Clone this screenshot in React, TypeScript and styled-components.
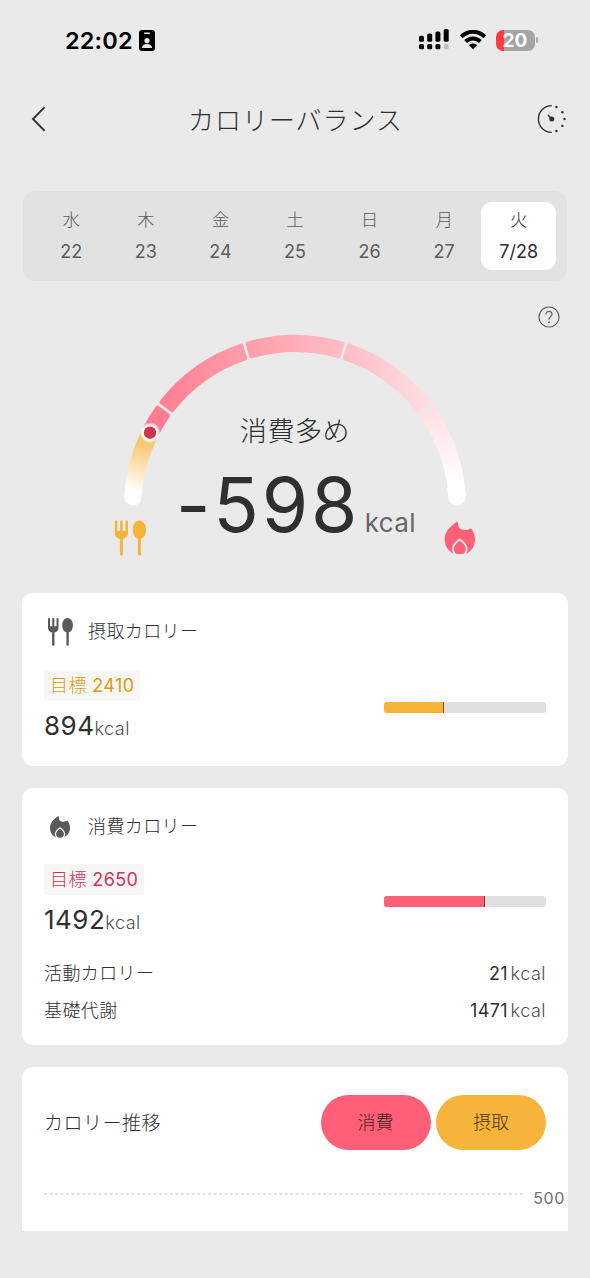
import React from "react";
import styled, { createGlobalStyle } from "styled-components";

const GlobalStyle = createGlobalStyle`
  * { box-sizing: border-box; }
  body {
    margin: 0;
    background: #eaeaea;
    color: #2e2f2f;
    font-family: Inter, "Noto Sans CJK JP", sans-serif;
    font-weight: 300;
  }
  svg { display: block; flex: none; }
`;

const Screen = styled.div`
  width: 590px;
  height: 1278px;
  overflow: hidden;
  background: #eaeaea;
  display: flex;
  flex-direction: column;
`;

const StatusBar = styled.div`
  height: 80px;
  flex: none;
  padding: 0 52px 0 65px;
  display: flex;
  align-items: center;
  justify-content: space-between;
`;

const StatusGroup = styled.div<{ $gap: number }>`
  display: flex;
  align-items: center;
  gap: ${(p) => p.$gap}px;
`;

const Clock = styled.span`
  margin-top: 1px;
  font-size: 23.5px;
  font-weight: 600;
  line-height: 28px;
  letter-spacing: 0.15px;
  color: #000;
`;

const Battery = styled.div`
  display: flex;
  align-items: center;
  gap: 1px;
`;

const BatteryBody = styled.div`
  width: 39px;
  height: 21px;
  border-radius: 7px;
  background: linear-gradient(90deg, #ff3b3f 8px, #a4a4a4 8px);
  color: #fff;
  font-size: 19px;
  font-weight: 700;
  line-height: 21px;
  text-align: center;
`;

const BatteryTip = styled.div`
  width: 2.5px;
  height: 6px;
  border-radius: 0 3px 3px 0;
  background: #a4a4a4;
`;

const Header = styled.header`
  height: 78px;
  flex: none;
  padding: 0 23px 0 30px;
  display: flex;
  align-items: center;
  justify-content: space-between;
`;

const Title = styled.h1`
  margin: 3px 0 0 6px;
  font-size: 26px;
  font-weight: 300;
  line-height: 40px;
  letter-spacing: 1px;
`;

const DayBar = styled.nav`
  margin: 33px 23px 0;
  height: 90px;
  flex: none;
  padding: 11px 11px;
  border-radius: 12px;
  background: #e2e2e2;
  display: grid;
  grid-template-columns: repeat(7, 1fr);
`;

const Day = styled.div<{ $active?: boolean }>`
  height: 68px;
  padding-top: 2px;
  border-radius: 11px;
  background: ${(p) => (p.$active ? "#fff" : "transparent")};
  color: ${(p) => (p.$active ? "#2e2f2f" : "#5c5c5c")};
  display: flex;
  flex-direction: column;
  align-items: center;
`;

const Weekday = styled.span`
  font-size: 17.5px;
  line-height: 32px;
`;

const DateNumber = styled.span`
  font-size: 18px;
  line-height: 32px;
  font-weight: 400;
`;

const HelpRow = styled.div`
  height: 54px;
  flex: none;
  padding: 25px 30px 0 0;
  display: flex;
  justify-content: flex-end;
`;

const GaugeArea = styled.section`
  position: relative;
  height: 258px;
  flex: none;
  display: flex;
  flex-direction: column;
  align-items: center;
`;

const GaugeDrawing = styled.svg`
  position: absolute;
  left: 95px;
  top: -15px;
`;

const GaugeLabel = styled.div`
  position: relative;
  margin-top: 77px;
  font-size: 27px;
  line-height: 40px;
  letter-spacing: 0.5px;
`;

const GaugeReading = styled.div`
  position: relative;
  width: 240px;
  margin: 13px 0 0 2px;
  display: flex;
  align-items: baseline;
  justify-content: space-between;
  line-height: 80px;
`;

const GaugeValue = styled.span`
  font-size: 75px;
  font-weight: 400;
  letter-spacing: 2.8px;
`;

const GaugeUnit = styled.span`
  font-size: 26px;
  font-weight: 400;
  color: #666;
  letter-spacing: 0.4px;
`;

const Card = styled.section<{ $height: number; $cut?: boolean }>`
  height: ${(p) => p.$height}px;
  flex: none;
  margin: 0 22px ${(p) => (p.$cut ? 0 : 22)}px;
  padding: 22px;
  border-radius: ${(p) => (p.$cut ? "11px 11px 0 0" : "11px")};
  background: #fff;
`;

const CardHeading = styled.div`
  height: 34px;
  display: flex;
  align-items: center;
`;

const IconSlot = styled.div<{ $drop?: number }>`
  width: 32px;
  margin-right: 12px;
  padding-top: ${(p) => p.$drop ?? 0}px;
  display: flex;
  justify-content: center;
`;

const Label = styled.span`
  font-size: 18px;
  line-height: 32px;
  letter-spacing: 0.4px;
`;

const MetricRow = styled.div`
  margin-top: 20.5px;
  display: flex;
  align-items: center;
  justify-content: space-between;
`;

const Goal = styled.div<{ $color: string }>`
  display: inline-block;
  height: 31px;
  padding: 0 5.5px 0 6px;
  border-radius: 3px;
  background: #f7f7f7;
  color: ${(p) => p.$color};
  font-size: 18px;
  line-height: 32px;
  letter-spacing: 0.4px;
`;

const GoalNumber = styled.span`
  font-weight: 400;
`;

const Amount = styled.div`
  margin-top: 5px;
  font-size: 26px;
  font-weight: 400;
  line-height: 40px;
  letter-spacing: 0.5px;
`;

const Unit = styled.span`
  font-size: 18px;
  font-weight: 300;
  color: #505050;
  letter-spacing: 0.5px;
`;

const Track = styled.div`
  width: 162px;
  height: 11px;
  margin-bottom: 3.6px;
  border-radius: 3px;
  background: #e0e0e0;
  overflow: hidden;
`;

const Fill = styled.div<{ $color: string; $edge: string }>`
  height: 100%;
  background: ${(p) => p.$color};
  border-right: 1px solid ${(p) => p.$edge};
`;

const Breakdown = styled.div`
  margin-top: 12.5px;
`;

const BreakdownRow = styled.div`
  height: 37px;
  display: flex;
  align-items: center;
  justify-content: space-between;
`;

const BreakdownValue = styled.span`
  margin-bottom: 1.5px;
  font-size: 18px;
  font-weight: 400;
  letter-spacing: 0.4px;
  ${Unit} { margin-left: 2.5px; }
`;

const TrendHeader = styled.div`
  margin-top: 5.5px;
  height: 55px;
  display: flex;
  align-items: center;
`;

const TrendTitle = styled.h2`
  flex: 1;
  margin: 0;
  padding-bottom: 1px;
  font-size: 19px;
  font-weight: 300;
  letter-spacing: 0.5px;
`;

const Pill = styled.button<{ $color: string; $ink: string }>`
  width: 110px;
  height: 55px;
  margin: 0 0 0 5.5px;
  padding: 0 0 2px;
  border: 0;
  border-radius: 27.5px;
  background: ${(p) => p.$color};
  color: ${(p) => p.$ink};
  font: inherit;
  font-size: 18px;
`;

const AxisRow = styled.div`
  margin: 35.5px -19px 0 0;
  height: 26px;
  display: flex;
  justify-content: space-between;
`;

const AxisLabel = styled.span`
  font-size: 16px;
  line-height: 27px;
  font-weight: 400;
  color: #707070;
  letter-spacing: 0.6px;
`;

const YELLOW = "#f6b53a";
const PINK = "#ff6078";

const CX = 295;
const CY = 505.8;
const R_IN = 153.6;
const R_OUT = 171;

const polar = (deg: number, r: number) => {
  const a = (deg * Math.PI) / 180;
  return `${(CX - r * Math.cos(a)).toFixed(2)} ${(CY - r * Math.sin(a)).toFixed(2)}`;
};

// Ring sector inset by its own stroke so that the corners come out rounded.
const sector = (from: number, to: number, inset = 2) => {
  const o = R_OUT - inset;
  const i = R_IN + inset;
  const d = (r: number) => (inset / r) * (180 / Math.PI);
  return `M${polar(from + d(o), o)}A${o} ${o} 0 0 1 ${polar(to - d(o), o)}L${polar(to - d(i), i)}A${i} ${i} 0 0 0 ${polar(from + d(i), i)}Z`;
};

const arc = (from: number, to: number) => {
  const r = (R_IN + R_OUT) / 2;
  return `M${polar(from, r)}A${r} ${r} 0 0 1 ${polar(to, r)}`;
};

const CutleryShape = () => (
  <>
    <path d="M0 1.2C0 .4.5 0 1.2 0S2.5.4 2.5 1.2V10.3H5.3V1.2C5.3.4 5.9 0 6.6 0S7.9.4 7.9 1.2V10.3H10.7V1.2C10.7.4 11.3 0 12 0S13.2.4 13.2 1.2V12.5C13.2 15.6 11 17.8 8.1 18.3V33.5C8.1 34.3 7.5 34.8 6.6 34.8S5.1 34.3 5.1 33.5V18.3C2.2 17.8 0 15.6 0 12.5Z" />
    <path d="M24.6 0C28.4 0 31.3 4 31.3 9C31.3 13.6 29.4 17.2 26.1 18V33.5C26.1 34.3 25.5 34.8 24.6 34.8S23.1 34.3 23.1 33.5V18C19.8 17.2 17.9 13.6 17.9 9C17.9 4 20.8 0 24.6 0Z" />
  </>
);

const FlameShape = ({ color, gap }: { color: string; gap: string }) => (
  <>
    <path
      fill={color}
      d="M12.6 0C5.5 4.7 0 10.4 0 17.7C0 24.6 3.4 30 9.5 32.4H21C27 30 30.4 24.6 30.4 18.4C30.4 13.4 28.8 9.7 26.3 6.8C23 9.2 16.8 9.2 14.5 6.3C13 4.4 14.3 2 12.6 0Z"
    />
    <path
      fill="none"
      stroke={gap}
      strokeWidth="1.8"
      d="M10.8 33C6.4 28.6 8 22.8 15.2 18C22.4 22.8 24 28.6 19.6 33"
    />
    <path fill={color} d="M10.9 31.4C12.5 33 17.9 33 19.5 31.4Z" />
  </>
);

const CutleryIcon = () => (
  <svg width="25" height="28" viewBox="0 0 31.4 35.2" fill="#5a5a5a">
    <CutleryShape />
  </svg>
);

const FlameIcon = () => (
  <svg width="20" height="22" viewBox="0 0 30.4 33.4">
    <FlameShape color="#5a5a5a" gap="#fff" />
  </svg>
);

const Gauge = () => (
  <GaugeDrawing width="400" height="240" viewBox="95 320 400 240">
    <defs>
      <linearGradient id="intake" gradientUnits="userSpaceOnUse" x1="150" y1="432" x2="138" y2="492">
        <stop offset="0" stopColor="#f7c05a" />
        <stop offset="0.25" stopColor="#f8ca78" />
        <stop offset="1" stopColor="#fff" />
      </linearGradient>
      <linearGradient id="burn" gradientUnits="userSpaceOnUse" x1="150" y1="0" x2="430" y2="0">
        <stop offset="0" stopColor="#ff7a8e" />
        <stop offset="0.34" stopColor="#ff9dab" />
        <stop offset="0.52" stopColor="#ffaeb9" />
        <stop offset="0.7" stopColor="#febdc6" />
        <stop offset="1" stopColor="#ffdfe4" />
      </linearGradient>
      <linearGradient id="burnEnd" gradientUnits="userSpaceOnUse" x1="430" y1="405" x2="452" y2="485">
        <stop offset="0" stopColor="#ffdde2" />
        <stop offset="1" stopColor="#fff" />
      </linearGradient>
      <radialGradient id="halo">
        <stop offset="0.72" stopColor="#fff" />
        <stop offset="1" stopColor="#fff" stopOpacity="0" />
      </radialGradient>
    </defs>
    <path d={arc(3.2, 26)} fill="none" stroke="url(#intake)" strokeWidth="17.4" strokeLinecap="round" />
    <g fill="url(#burn)" stroke="url(#burn)" strokeWidth="4" strokeLinejoin="round">
      <path d={sector(26.7, 36.2)} />
      <path d={sector(37.2, 72.1)} />
      <path d={sector(73, 107)} />
      <path d={sector(107.9, 142.8)} />
    </g>
    <path d={sector(143.8, 160)} fill="url(#burnEnd)" stroke="url(#burnEnd)" strokeWidth="4" strokeLinejoin="round" />
    <path d={arc(155, 176.8)} fill="none" stroke="url(#burnEnd)" strokeWidth="17.4" />
    <path d={arc(175, 176.8)} fill="none" stroke="#fff" strokeWidth="17.4" strokeLinecap="round" />
    <circle cx="150" cy="432.7" r="10.5" fill="url(#halo)" />
    <circle cx="150" cy="432.7" r="6.2" fill="#cf344f" />
    <g transform="translate(114.8 520.6)" fill={YELLOW}>
      <CutleryShape />
    </g>
    <g transform="translate(444.6 521.4)">
      <FlameShape color={PINK} gap="#eaeaea" />
    </g>
  </GaugeDrawing>
);

const BadgeIcon = () => (
  <svg width="16" height="21" viewBox="0 0 16 21">
    <rect width="16" height="21" rx="3" fill="#000" />
    <rect x="5" y="2.6" width="6" height="1.5" rx=".7" fill="#eaeaea" />
    <circle cx="8" cy="10.6" r="2.6" fill="#eaeaea" />
    <path d="M3 18C3 15.4 5.2 14 8 14S13 15.4 13 18Z" fill="#eaeaea" />
  </svg>
);

const SignalIcon = () => (
  <svg width="31" height="22" viewBox="0 0 31 22">
    <rect x="0" y="6.8" width="5" height="6" rx="1.6" />
    <rect x="8.2" y="4.5" width="5" height="8.3" rx="1.6" />
    <rect x="16.4" y="2.5" width="5" height="10.3" rx="1.6" />
    <rect x="24.7" y="0" width="5" height="12.8" rx="1.6" />
    <rect x="0" y="14.9" width="5" height="5.4" rx="1.6" />
    <rect x="8.2" y="14.9" width="5" height="5.4" rx="1.6" />
    <rect x="16.4" y="14.9" width="5" height="5.4" rx="1.6" />
    <rect x="24.7" y="14.9" width="5" height="5.4" rx="1.6" fill="#bdbdbd" />
  </svg>
);

const WifiIcon = () => (
  <svg width="26" height="20" viewBox="0 0 26 20" fill="none" stroke="#000" strokeWidth="3.9">
    <path d="M1.3 6.8C8 0 18 0 24.7 6.8" />
    <path d="M5.6 11.5C9.9 7.4 16.1 7.4 20.4 11.5" />
    <path d="M13 19.3L8.8 15.1C11.2 12.9 14.8 12.9 17.2 15.1Z" fill="#000" stroke="none" />
  </svg>
);

const BackIcon = () => (
  <svg width="18" height="26" viewBox="0 0 18 26" fill="none" stroke="#2e2f2f" strokeWidth="1.9">
    <path d="M14.6 1.2L3 13L14.6 24.8" />
  </svg>
);

const TimerIcon = () => (
  <svg width="30" height="30" viewBox="0 0 30 30">
    <path d="M14.8 1.6A13.4 13.4 0 0 0 14.8 28.4" fill="none" stroke="#2e2f2f" strokeWidth="1.4" />
    <path d="M11 11L14.8 15" stroke="#2e2f2f" strokeWidth="1.5" />
    <g fill="#2e2f2f">
      <circle cx="14.8" cy="15" r="2.5" />
      <circle cx="19.4" cy="3" r="1.2" />
      <circle cx="25.4" cy="8.2" r="1.2" />
      <circle cx="27.5" cy="15" r="1.2" />
      <circle cx="25.4" cy="21.9" r="1.2" />
      <circle cx="19.4" cy="27" r="1.2" />
    </g>
  </svg>
);

const HelpIcon = () => (
  <svg width="22" height="22" viewBox="0 0 22 22" fill="none" stroke="#5f5f5f" strokeWidth="1.2">
    <circle cx="11" cy="11" r="10" />
    <path d="M8 8.4C8 6.5 9.2 5.3 11 5.3S14 6.5 14 8.2C14 10.4 11 10.8 11 13.2V13.8" />
    <circle cx="11" cy="16.2" r=".9" fill="#5f5f5f" stroke="none" />
  </svg>
);

const days = [
  ["水", "22"],
  ["木", "23"],
  ["金", "24"],
  ["土", "25"],
  ["日", "26"],
  ["月", "27"],
  ["火", "7/28"],
];

type MetricProps = { goal: string; goalColor: string; amount: string; fill: string; edge: string; width: number };

const Metric = ({ goal, goalColor, amount, fill, edge, width }: MetricProps) => (
  <MetricRow>
    <div>
      <Goal $color={goalColor}>
        目標 <GoalNumber>{goal}</GoalNumber>
      </Goal>
      <Amount>
        {amount}
        <Unit>kcal</Unit>
      </Amount>
    </div>
    <Track>
      <Fill $color={fill} $edge={edge} style={{ width }} />
    </Track>
  </MetricRow>
);

export default function App() {
  return (
    <Screen>
      <GlobalStyle />
      <StatusBar>
        <StatusGroup $gap={6}>
          <Clock>22:02</Clock>
          <BadgeIcon />
        </StatusGroup>
        <StatusGroup $gap={10}>
          <SignalIcon />
          <WifiIcon />
          <Battery>
            <BatteryBody>20</BatteryBody>
            <BatteryTip />
          </Battery>
        </StatusGroup>
      </StatusBar>
      <Header>
        <BackIcon />
        <Title>カロリーバランス</Title>
        <TimerIcon />
      </Header>
      <DayBar>
        {days.map(([weekday, date], i) => (
          <Day key={date} $active={i === 6}>
            <Weekday>{weekday}</Weekday>
            <DateNumber>{date}</DateNumber>
          </Day>
        ))}
      </DayBar>
      <HelpRow>
        <HelpIcon />
      </HelpRow>
      <GaugeArea>
        <Gauge />
        <GaugeLabel>消費多め</GaugeLabel>
        <GaugeReading>
          <GaugeValue>-598</GaugeValue>
          <GaugeUnit>kcal</GaugeUnit>
        </GaugeReading>
      </GaugeArea>
      <Card $height={172.7}>
        <CardHeading>
          <IconSlot>
            <CutleryIcon />
          </IconSlot>
          <Label>摂取カロリー</Label>
        </CardHeading>
        <Metric goal="2410" goalColor="#dd9b10" amount="894" fill={YELLOW} edge="#7a5a1d" width={60} />
      </Card>
      <Card $height={257.8}>
        <CardHeading>
          <IconSlot $drop={1.5}>
            <FlameIcon />
          </IconSlot>
          <Label>消費カロリー</Label>
        </CardHeading>
        <Metric goal="2650" goalColor="#d2334f" amount="1492" fill={PINK} edge="#8a2f3d" width={100.5} />
        <Breakdown>
          <BreakdownRow>
            <Label>活動カロリー</Label>
            <BreakdownValue>
              21<Unit>kcal</Unit>
            </BreakdownValue>
          </BreakdownRow>
          <BreakdownRow>
            <Label>基礎代謝</Label>
            <BreakdownValue>
              1471<Unit>kcal</Unit>
            </BreakdownValue>
          </BreakdownRow>
        </Breakdown>
      </Card>
      <Card $height={163.7} $cut>
        <TrendHeader>
          <TrendTitle>カロリー推移</TrendTitle>
          <Pill $color={PINK} $ink="#4f1c24">消費</Pill>
          <Pill $color={YELLOW} $ink="#4a3610">摂取</Pill>
        </TrendHeader>
        <AxisRow>
          <svg width="481" height="20" viewBox="0 0 481 20">
            <path d="M0 9H481" stroke="#dadada" strokeWidth="1.3" strokeDasharray="3 2.47" />
          </svg>
          <AxisLabel>500</AxisLabel>
        </AxisRow>
      </Card>
    </Screen>
  );
}
